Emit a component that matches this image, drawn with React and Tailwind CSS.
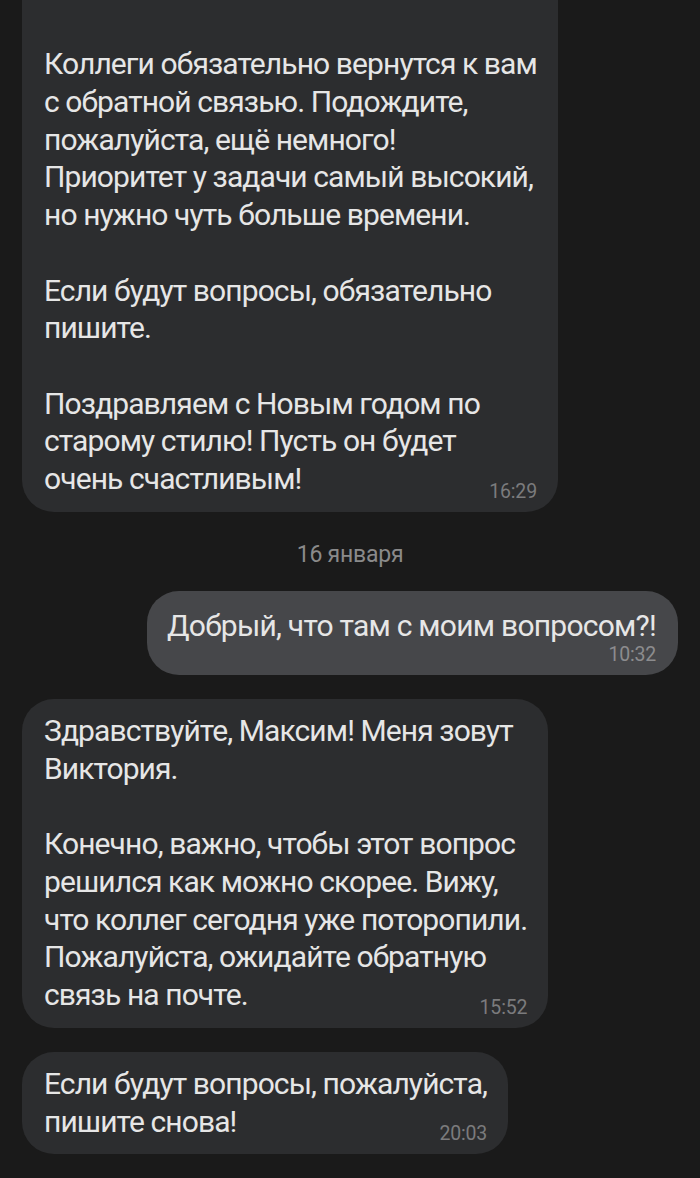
const messages = [
  {
    id: 1,
    out: false,
    lines: [
      "Мы проверим.",
      "",
      "Коллеги обязательно вернутся к вам",
      "с обратной связью. Подождите,",
      "пожалуйста, ещё немного!",
      "Приоритет у задачи самый высокий,",
      "но нужно чуть больше времени.",
      "",
      "Если будут вопросы, обязательно",
      "пишите.",
      "",
      "Поздравляем с Новым годом по",
      "старому стилю! Пусть он будет",
      "очень счастливым!",
    ],
    time: "16:29",
    cut: true,
  },
  { id: "d1", date: "16 января" },
  {
    id: 2,
    out: true,
    lines: ["Добрый, что там с моим вопросом?!"],
    time: "10:32",
  },
  {
    id: 3,
    out: false,
    lines: [
      "Здравствуйте, Максим! Меня зовут",
      "Виктория.",
      "",
      "Конечно, важно, чтобы этот вопрос",
      "решился как можно скорее. Вижу,",
      "что коллег сегодня уже поторопили.",
      "Пожалуйста, ожидайте обратную",
      "связь на почте.",
    ],
    time: "15:52",
  },
  {
    id: 4,
    out: false,
    lines: ["Если будут вопросы, пожалуйста,", "пишите снова!"],
    time: "20:03",
  },
];

function Bubble({ msg }) {
  if (msg.out) {
    return (
      <div className="flex justify-end px-[22px]">
        <div className="rounded-[32px] bg-[#46474a] pl-[20px] pr-[22px] pt-[16px] pb-[9px]">
          <div className="text-[30px] leading-[37.7px] tracking-[-0.025em] text-[#e6e6e6] whitespace-nowrap">
            {msg.lines.join("\n")}
          </div>
          <div className="text-right text-[19.5px] leading-[22px] tracking-[-0.01em] text-[#8c8c8e]">
            {msg.time}
          </div>
        </div>
      </div>
    );
  }
  return (
    <div className="flex justify-start px-[22px]">
      <div className="rounded-[32px] bg-[#2c2d2f] pl-[22px] pr-[21px] pt-[13px] pb-[9px]">
        <div className="text-[30px] leading-[37.7px] tracking-[-0.03em] text-[#e6e6e6] whitespace-pre">
          {msg.lines.map((l, i) => (
            <div
              key={i}
              className={msg.cut && i === 0 ? "-mt-[8px] h-[45.7px]" : "h-[37.7px]"}
            >
              {l}
            </div>
          ))}
        </div>
        <div className="-mt-[17px] text-right text-[19.5px] leading-[22px] tracking-[-0.01em] text-[#7b7b7d]">
          {msg.time}
        </div>
      </div>
    </div>
  );
}

export default function App() {
  return (
    <div
      className="h-[1178px] w-[700px] overflow-hidden bg-[#1a1a1a]"
      style={{ fontFamily: "Roboto, 'Noto Sans', sans-serif" }}
    >
      <div className="-mt-[43px] flex flex-col">
        {messages.map((msg, i) =>
          msg.date ? (
            <div
              key={msg.id}
              className="mt-[30px] mb-[23px] text-center text-[23px] leading-[26px] tracking-[-0.01em] text-[#8a8a8a]"
            >
              {msg.date}
            </div>
          ) : (
            <div key={msg.id} className={i > 0 && !messages[i - 1].date ? "mt-[24px]" : ""}>
              <Bubble msg={msg} />
            </div>
          )
        )}
      </div>
    </div>
  );
}
